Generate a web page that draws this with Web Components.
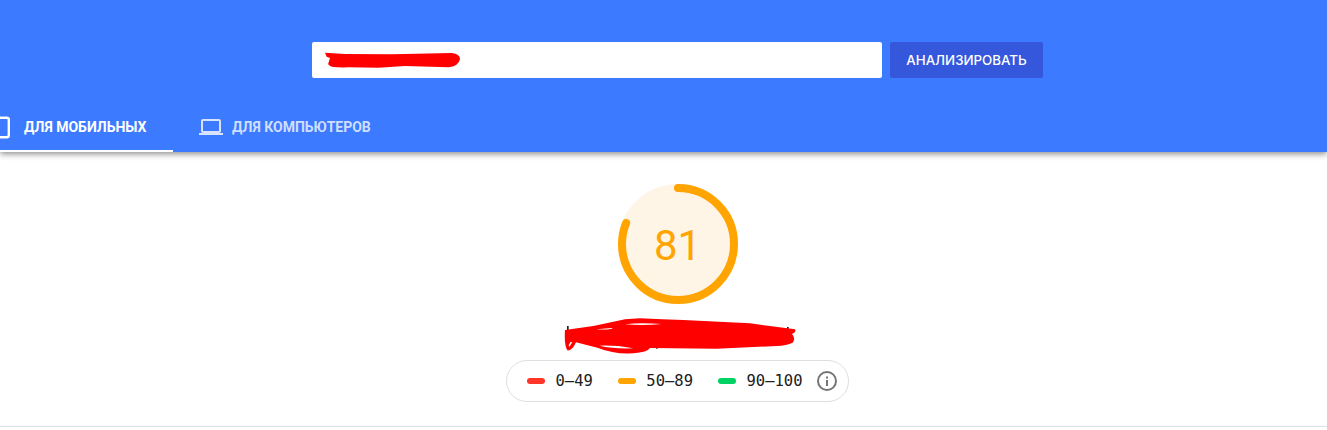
<!DOCTYPE html>
<html>
<head>
<meta charset="utf-8">
<title>PageSpeed</title>
<style>
  html, body { margin: 0; height: 100%; overflow: hidden; background: #fff; }
  body { font-family: Roboto, "Liberation Sans", sans-serif; }
</style>
</head>
<body>
<psi-header>
  <psi-search></psi-search>
  <psi-tabs></psi-tabs>
</psi-header>
<psi-report>
  <psi-gauge score="81"></psi-gauge>
  <psi-scribble></psi-scribble>
  <psi-legend></psi-legend>
</psi-report>
<script>
class PsiHeader extends HTMLElement {
    constructor() {
        super();
        this.attachShadow({ mode: 'open' });
        this.shadowRoot.innerHTML = `
            <style>
                :host {
                    display: block;
                    position: relative;
                    height: 152px;
                    background: #3c7bff;
                    box-shadow: 0 2px 6px rgba(0, 0, 0, 0.45);
                }
                .inner {
                    display: flex;
                    flex-direction: column;
                    justify-content: space-between;
                    height: 152px;
                    padding-top: 42px;
                    box-sizing: border-box;
                }
            </style>
            <div class="inner"><slot></slot></div>
        `;
    }
}

class PsiSearch extends HTMLElement {
    constructor() {
        super();
        this.attachShadow({ mode: 'open' });
        this.shadowRoot.innerHTML = `
            <style>
                :host {
                    display: flex;
                    justify-content: center;
                    gap: 8px;
                    padding-left: 28px;
                }
                .field {
                    display: flex;
                    align-items: center;
                    width: 570px;
                    height: 36px;
                    padding-left: 13px;
                    box-sizing: border-box;
                    background: #fff;
                    border-radius: 2px;
                }
                .field svg { display: block; }
                button {
                    width: 153px;
                    height: 36px;
                    padding: 0;
                    border: none;
                    border-radius: 2px;
                    background: #3457dc;
                    color: #fff;
                    font: 500 13.3px Inter, Roboto, sans-serif;
                }
            </style>
            <div class="field">
                <svg width="136" height="16" viewBox="0 0 408 48">
                    <path d="M0 2 L60 6 L200 7 L380 3 Q405 5 405 22 Q400 44 370 46 L240 42 L160 47 L70 46 Q40 47 20 44 Q8 40 10 34 L15 18 L5 14 Z" fill="#f00"/>
                </svg>
            </div>
            <button>АНАЛИЗИРОВАТЬ</button>
        `;
    }
}

class PsiTabs extends HTMLElement {
    constructor() {
        super();
        this.attachShadow({ mode: 'open' });
        this.shadowRoot.innerHTML = `
            <style>
                :host {
                    display: flex;
                    height: 50px;
                    overflow: hidden;
                }
                .tab {
                    display: flex;
                    align-items: center;
                    height: 50px;
                    box-sizing: border-box;
                    padding-top: 2px;
                    font: 700 14px Roboto, sans-serif;
                    color: rgba(255, 255, 255, 0.76);
                }
                .tab svg { display: block; flex: none; }
                .mobile {
                    gap: 14px;
                    width: 187px;
                    margin-left: -14px;
                    color: #fff;
                    border-bottom: 2px solid #fff;
                }
                .desktop { gap: 9px; padding-left: 26px; padding-bottom: 2px; }
            </style>
            <div class="tab mobile">
                <svg width="24" height="24" viewBox="0 0 24 24"><rect x="10.800" y="2.700" width="12" height="19.600" rx="2" fill="none" stroke="#fff" stroke-width="2.400"/></svg>
                <span>ДЛЯ МОБИЛЬНЫХ</span>
            </div>
            <div class="tab desktop">
                <svg width="24" height="24" viewBox="0 0 24 24" fill="#d8e4ff"><path d="M20 18c1.100 0 2-.9 2-2V6c0-1.100-.9-2-2-2H4c-1.100 0-2 .9-2 2v10c0 1.100.9 2 2 2H0v2h24v-2h-4zM4 6h16v10H4V6z"/></svg>
                <span>ДЛЯ КОМПЬЮТЕРОВ</span>
            </div>
        `;
    }
}

class PsiReport extends HTMLElement {
    constructor() {
        super();
        this.attachShadow({ mode: 'open' });
        this.shadowRoot.innerHTML = `
            <style>
                :host {
                    display: flex;
                    flex-direction: column;
                    align-items: center;
                    height: 274px;
                    padding-left: 28px;
                    border-bottom: 1px solid #e0e0e0;
                }
            </style>
            <slot></slot>
        `;
    }
}

class PsiGauge extends HTMLElement {
    constructor() {
        super();
        this.attachShadow({ mode: 'open' });
        const score = this.getAttribute('score');
        const r = 56;
        const len = 2 * Math.PI * r;
        const dash = len * score / 100;
        this.shadowRoot.innerHTML = `
            <style>
                :host {
                    display: block;
                    position: relative;
                    width: 120px;
                    height: 120px;
                    margin-top: 32px;
                }
                svg { display: block; }
                .num {
                    position: absolute;
                    inset: 3px 0 0 0;
                    display: flex;
                    align-items: center;
                    justify-content: center;
                    font: 400 42px Roboto, sans-serif;
                    color: #ffa400;
                }
            </style>
            <svg width="120" height="120" viewBox="0 0 120 120">
                <circle cx="60" cy="60" r="60" fill="#fff5e6"/>
                <circle cx="60" cy="60" r="${r}" fill="none" stroke="#ffa400" stroke-width="8" stroke-linecap="round"
                    stroke-dasharray="${dash} ${len}" transform="rotate(-90 60 60)"/>
            </svg>
            <div class="num">${score}</div>
        `;
    }
}

class PsiScribble extends HTMLElement {
    constructor() {
        super();
        this.attachShadow({ mode: 'open' });
        this.shadowRoot.innerHTML = `
            <style>
                :host { display: block; width: 260px; height: 50px; margin: 6px 0 0 5px; }
                svg { display: block; }
            </style>
            <svg width="260" height="50" viewBox="0 0 780 150">
                <rect x="51" y="48" width="5" height="14" fill="#222"/>
                <rect x="318" y="108" width="5" height="8" fill="#222"/>
                <rect x="711" y="51" width="5" height="6" fill="#222"/>
                <path fill="#f00" fill-rule="evenodd" d="M45 60 L130 48 L225 28 L270 25 Q340 28 400 30 L600 40 L735 58 Q740 66 726 72 Q738 85 728 98 Q710 106 680 108 L500 116 L300 114 Q292 127 250 130 Q190 133 145 114 L78 97 Q66 124 52 121 Q42 105 45 60 Z M225 43 Q270 37 335 42 Q280 47 225 43 Z M140 58 L185 54 L188 56 Q160 60 140 58 Z M148 107 Q190 117 250 115 L205 108 Q170 106 148 107 Z M56 106 L62 95 L67 97 L58 110 Z"/>
            </svg>
        `;
    }
}

class PsiLegend extends HTMLElement {
    constructor() {
        super();
        this.attachShadow({ mode: 'open' });
        this.shadowRoot.innerHTML = `
            <style>
                :host {
                    display: flex;
                    align-items: center;
                    box-sizing: border-box;
                    width: 343px;
                    height: 42px;
                    padding: 0 11px 0 20px;
                    border: 1px solid #dfdfdf;
                    border-radius: 21px;
                    font: 400 15.5px "DejaVu Sans Mono", "Liberation Mono", monospace;
                    color: #212121;
                }
                .item { display: flex; align-items: center; gap: 10.5px; margin-right: 25px; }
                .item:last-of-type { margin-right: 0; }
                .bar { width: 18px; height: 6px; border-radius: 3px; }
                svg { display: block; margin-left: auto; }
            </style>
            <div class="item"><span class="bar" style="background:#ff3529"></span>0–49</div>
            <div class="item"><span class="bar" style="background:#ffa400"></span>50–89</div>
            <div class="item"><span class="bar" style="background:#00d364"></span>90–100</div>
            <svg width="20" height="20" viewBox="0 0 20 20">
                <circle cx="10" cy="10" r="9" fill="none" stroke="#757575" stroke-width="2"/>
                <rect x="9" y="9" width="2" height="6" fill="#757575"/>
                <rect x="9" y="5.500" width="2" height="2" fill="#757575"/>
            </svg>
        `;
    }
}

customElements.define('psi-header', PsiHeader);
customElements.define('psi-search', PsiSearch);
customElements.define('psi-tabs', PsiTabs);
customElements.define('psi-report', PsiReport);
customElements.define('psi-gauge', PsiGauge);
customElements.define('psi-scribble', PsiScribble);
customElements.define('psi-legend', PsiLegend);
</script>
</body>
</html>
